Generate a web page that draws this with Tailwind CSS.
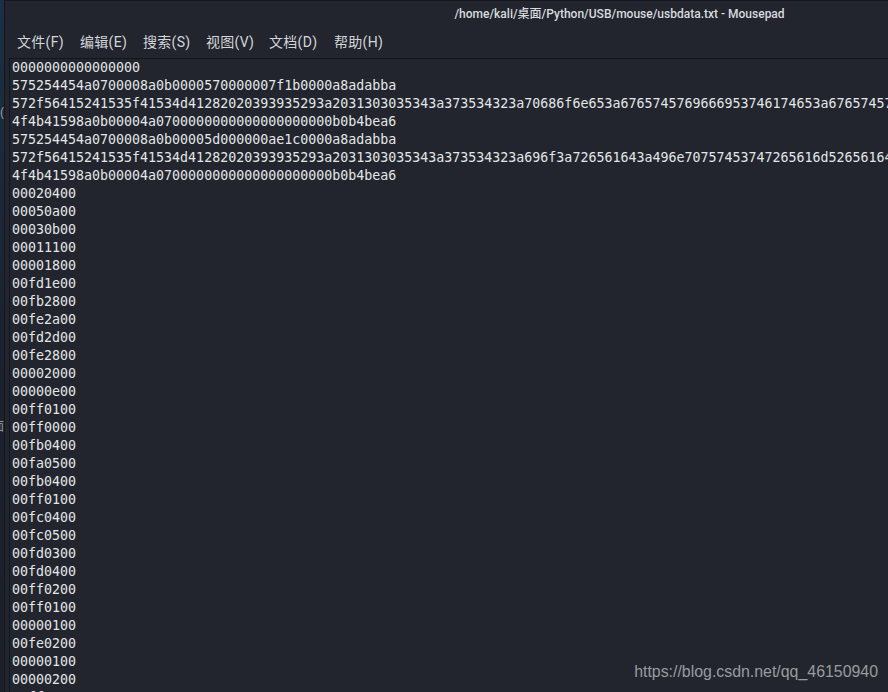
<!DOCTYPE html>
<html lang="en">
<head>
    <meta charset="UTF-8">
    <title>/home/kali/桌面/Python/USB/mouse/usbdata.txt - Mousepad</title>
    <script src="https://cdn.jsdelivr.net/npm/@tailwindcss/browser@4"></script>
</head>
<body class="bg-[#22252e] overflow-hidden">
    <div class="flex h-[692px] w-[888px] overflow-hidden">
        <!-- Desktop sliver -->
        <div class="relative w-[4px] shrink-0 overflow-hidden bg-linear-to-b from-[#1a3045] via-[#1b2230] to-[#1c1f27]">
            <span class="absolute left-0 top-[104px] text-[12px] leading-[16px] text-[#9a9ca3] font-['Liberation_Sans',sans-serif]">(</span>
            <span class="absolute left-[-8px] top-[418px] text-[12px] leading-[16px] text-[#9a9ca3] font-['Noto_Sans_CJK_SC',sans-serif]">面</span>
        </div>
        <!-- Window -->
        <div class="relative flex-1 min-w-0 flex flex-col bg-[#22252e] border-l border-t border-[#14161b]">
            <!-- Title bar -->
            <div class="h-[25px] shrink-0 flex justify-center items-center pl-[346px] text-[12px] font-medium text-[#d8dade] font-['Roboto','Noto_Sans_CJK_SC',sans-serif]">
                /home/kali/桌面/Python/USB/mouse/usbdata.txt - Mousepad
            </div>
            <!-- Menu -->
            <nav class="h-[32px] shrink-0 flex items-center gap-[16px] pl-[12px] text-[14px] tracking-[0.3px] text-[#d3d5da] font-['Roboto','Noto_Sans_CJK_SC',sans-serif]">
                <span class="w-[47px] whitespace-nowrap">文件(F)</span>
                <span class="w-[47px] whitespace-nowrap">编辑(E)</span>
                <span class="w-[47px] whitespace-nowrap">搜索(S)</span>
                <span class="w-[47px] whitespace-nowrap">视图(V)</span>
                <span class="w-[49px] whitespace-nowrap">文档(D)</span>
                <span class="w-[49px] whitespace-nowrap">帮助(H)</span>
            </nav>
            <!-- Text area -->
            <pre class="flex-1 min-w-0 overflow-hidden border-t border-l border-[#14161b] ml-[4px] pl-[2px] text-[13.3px] leading-[18px] text-[#e4e5e7] font-['DejaVu_Sans_Mono',monospace]">0000000000000000
575254454a0700008a0b0000570000007f1b0000a8adabba
572f56415241535f41534d41282020393935293a2031303035343a373534323a70686f6e653a6765745769666953746174653a67657457
4f4b41598a0b00004a0700000000000000000000b0b4bea6
575254454a0700008a0b00005d000000ae1c0000a8adabba
572f56415241535f41534d41282020393935293a2031303035343a373534323a696f3a726561643a496e70757453747265616d52656164
4f4b41598a0b00004a0700000000000000000000b0b4bea6
00020400
00050a00
00030b00
00011100
00001800
00fd1e00
00fb2800
00fe2a00
00fd2d00
00fe2800
00002000
00000e00
00ff0100
00ff0000
00fb0400
00fa0500
00fb0400
00ff0100
00fc0400
00fc0500
00fd0300
00fd0400
00ff0200
00ff0100
00000100
00fe0200
00000100
00000200
00ff0000</pre>
            <!-- Watermark -->
            <span class="absolute right-[10px] bottom-[8px] text-[15.9px] text-[#9a9b9e] font-['Liberation_Sans',sans-serif]">https://blog.csdn.net/qq_46150940</span>
        </div>
    </div>
</body>
</html>
